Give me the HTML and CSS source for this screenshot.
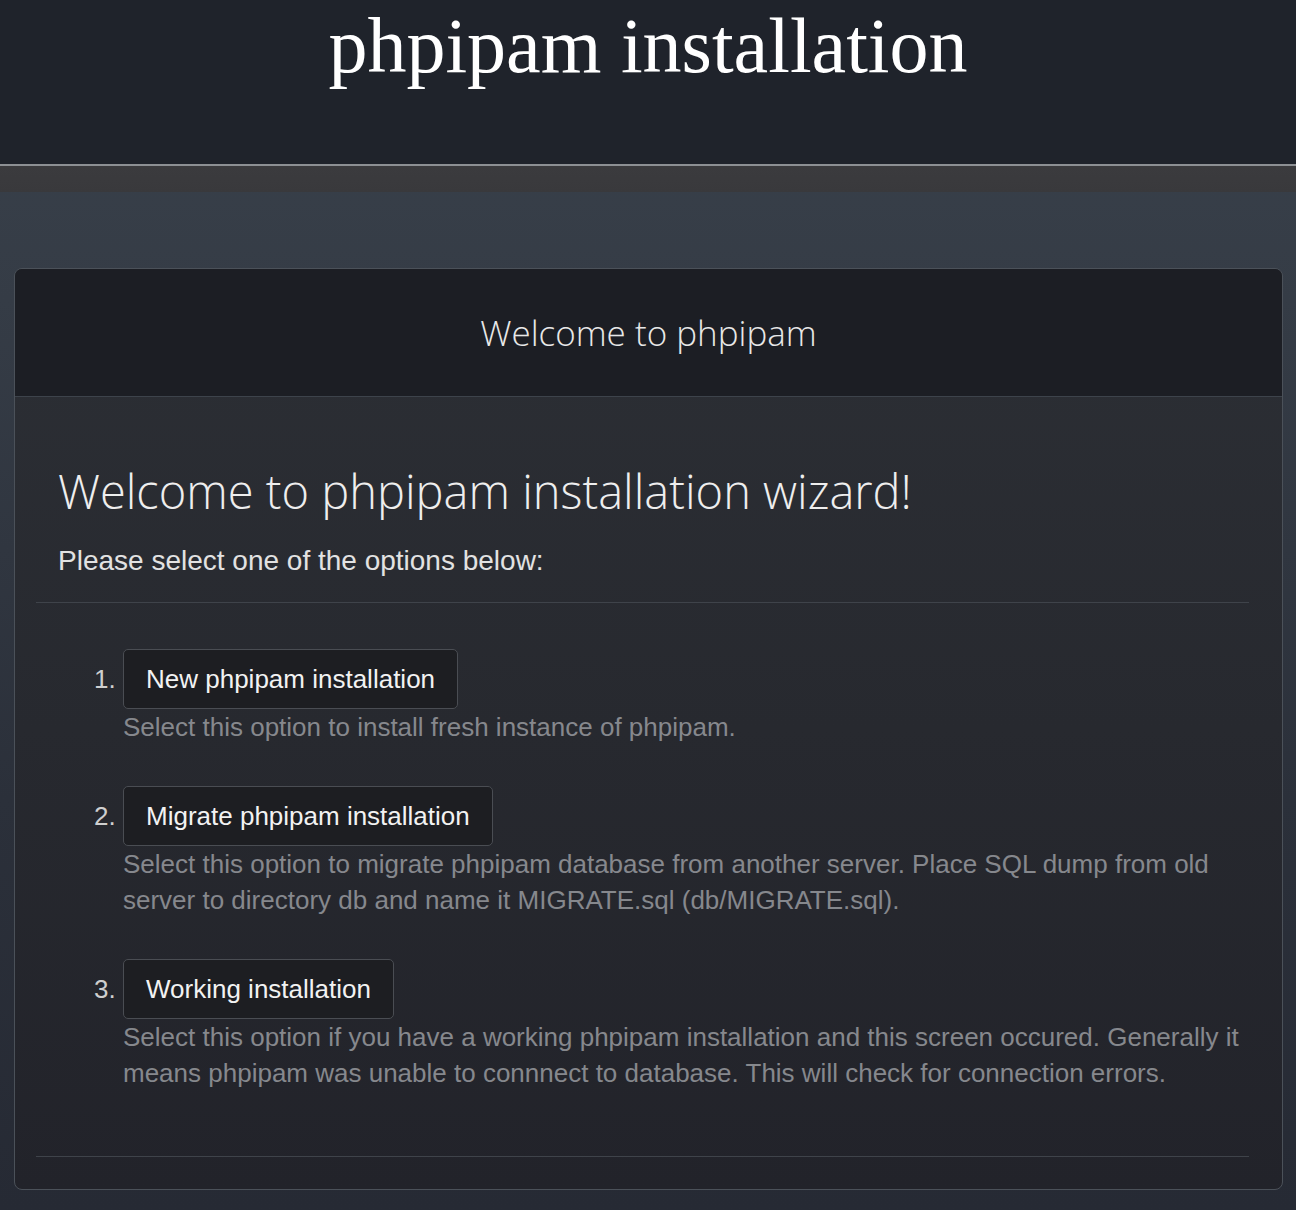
FILE: index.html
```html
<!DOCTYPE html>
<html lang="en">
<head>
<meta charset="utf-8">
<title>phpipam installation</title>
<link rel="stylesheet" href="styles.css">
</head>
<body>
<header class="topbar">
  <h1 class="site-title">phpipam installation</h1>
</header>
<div class="band"></div>
<main class="content">
  <section class="panel">
    <div class="panel-heading">Welcome to phpipam</div>
    <div class="panel-body">
      <div class="intro">
        <h3 class="wizard-title">Welcome to phpipam installation wizard!</h3>
        <p class="lead">Please select one of the options below:</p>
      </div>
      <hr class="divider">
      <ol class="options">
        <li>
          <a class="btn">New phpipam installation</a>
          <div class="desc">Select this option to install fresh instance of phpipam.</div>
        </li>
        <li>
          <a class="btn">Migrate phpipam installation</a>
          <div class="desc">Select this option to migrate phpipam database from another server. Place SQL dump from old server to directory db and name it MIGRATE.sql (db/MIGRATE.sql).</div>
        </li>
        <li>
          <a class="btn">Working installation</a>
          <div class="desc">Select this option if you have a working phpipam installation and this screen occured. Generally it means phpipam was unable to connnect to database. This will check for connection errors.</div>
        </li>
      </ol>
      <hr class="divider">
    </div>
  </section>
</main>
</body>
</html>
```

FILE: styles.css
```css
html, body {
  margin: 0;
  padding: 0;
}
body {
  width: 1296px;
  height: 1210px;
  overflow: hidden;
  font-family: "Liberation Sans", Arial, sans-serif;
  background: linear-gradient(180deg, #3a424c 0px, #353c46 300px, #2b303a 800px, #262a34 1210px);
  color: #e6e6e6;
}
.topbar {
  height: 164px;
  background: #1f232b;
  border-bottom: 2px solid #8d9094;
  text-align: center;
}
.site-title {
  margin: 0;
  padding-top: 7px;
  font-family: "Liberation Serif", "Times New Roman", serif;
  font-weight: normal;
  font-size: 78px;
  line-height: 78px;
  color: #ffffff;
}
.band {
  height: 26px;
  background: linear-gradient(180deg, #3b3b3e, #39393c);
}
.content {
  padding: 76px 13px 0 14px;
}
.panel {
  height: 922px;
  box-sizing: border-box;
  border: 1px solid #4b5159;
  border-radius: 8px;
  background: linear-gradient(180deg, #2c2f35 0%, #27292f 50%, #22232a 100%);
  overflow: hidden;
}
.panel-heading {
  height: 127px;
  display: flex;
  align-items: center;
  justify-content: center;
  background: #1c1e24;
  border-bottom: 1px solid #3d434b;
  font-family: "Open Sans", sans-serif;
  font-weight: 300;
  font-size: 35px;
  color: #e8e8e8;
}
.panel-body {
  padding: 0 33px 0 21px;
}
.intro {
  padding: 64px 22px 0;
}
.wizard-title {
  margin: 0;
  font-family: "Open Sans", sans-serif;
  font-weight: 300;
  font-size: 47px;
  line-height: 60px;
  color: #eeeeee;
}
.lead {
  margin: 20px 0 0;
  font-size: 28px;
  line-height: 40px;
  color: #e2e2e2;
}
.divider {
  margin: 21px 0 0;
  border: 0;
  border-top: 1px solid #3f434a;
  height: 0;
}
.options {
  margin: 46px 0 0;
  padding: 0 0 3px 87px;
  font-size: 26px;
  line-height: 36px;
}
.options li {
  margin-bottom: 41px;
  color: #cfcfcf;
}
.btn {
  display: inline-block;
  padding: 14px 22px;
  line-height: 30px;
  border: 1px solid #4a4d53;
  border-radius: 5px;
  background: #1d1e22;
  color: #f2f2f2;
  font-size: 26px;
}
.desc {
  color: #86888d;
}
```
